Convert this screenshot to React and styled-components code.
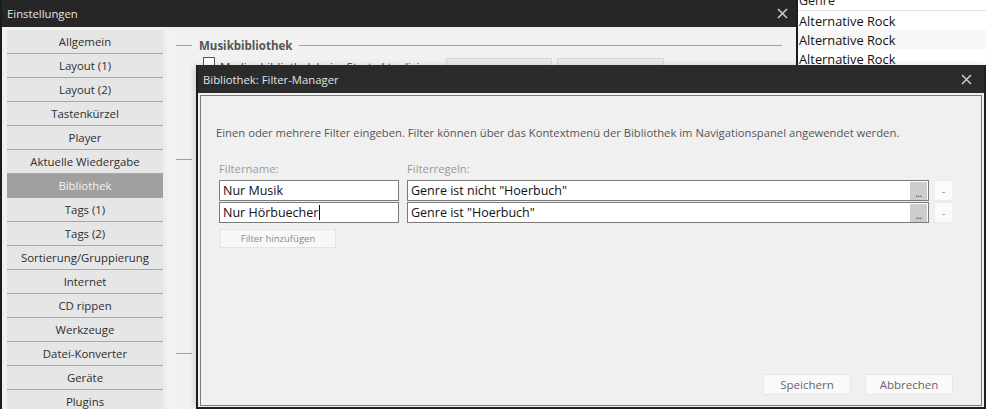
import styled, { createGlobalStyle } from 'styled-components';

const GlobalStyle = createGlobalStyle`
  html, body {
    margin: 0;
    padding: 0;
    overflow: hidden;
    background: #f0f0f0;
  }
  * {
    box-sizing: border-box;
  }
`;

const navItems = [
  'Allgemein',
  'Layout (1)',
  'Layout (2)',
  'Tastenkürzel',
  'Player',
  'Aktuelle Wiedergabe',
  'Bibliothek',
  'Tags (1)',
  'Tags (2)',
  'Sortierung/Gruppierung',
  'Internet',
  'CD rippen',
  'Werkzeuge',
  'Datei-Konverter',
  'Geräte',
  'Plugins',
];

const filters = [
  { name: 'Nur Musik', rule: 'Genre ist nicht "Hoerbuch"' },
  { name: 'Nur Hörbuecher', rule: 'Genre ist "Hoerbuch"', editing: true },
];

const CloseIcon = () => (
  <svg width="11" height="11" viewBox="0 0 11 11">
    <path d="M1 1 L10 10 M10 1 L1 10" stroke="#c8c8c8" strokeWidth="1.6" fill="none" />
  </svg>
);

const App = () => {
  return (
    <Screen>
      <GlobalStyle />
      <SettingsWindow>
        <TitleBar>
          <TitleText>Einstellungen</TitleText>
          <CloseIcon />
        </TitleBar>
        <SettingsBody>
          <Nav>
            {navItems.map((item) => (
              <NavItem key={item} $active={item === 'Bibliothek'}>
                {item}
              </NavItem>
            ))}
          </Nav>
          <NavShade />
          <Main>
            <Section $height={114}>
              <SectionHeader>
                <HeaderLine $w={16} />
                <SectionTitle>Musikbibliothek</SectionTitle>
                <HeaderLine $grow />
              </SectionHeader>
              <OptionRow>
                <Checkbox />
                <OptionText>Medienbibliothek beim Start aktualisieren</OptionText>
                <GhostButton $w={106} />
                <GhostButton $w={107} />
              </OptionRow>
            </Section>
            <Section $height={194}>
              <SectionHeader>
                <HeaderLine $w={16} />
                <SectionTitle>Navigation</SectionTitle>
                <HeaderLine $grow />
              </SectionHeader>
            </Section>
            <Section $height={60}>
              <SectionHeader>
                <HeaderLine $w={16} />
                <SectionTitle>Erweitert</SectionTitle>
                <HeaderLine $grow />
              </SectionHeader>
            </Section>
          </Main>
        </SettingsBody>
      </SettingsWindow>

      <ListPanel>
        <ListHeader>Genre</ListHeader>
        <ListRow>Alternative Rock</ListRow>
        <ListRow $alt>Alternative Rock</ListRow>
        <ListRow>Alternative Rock</ListRow>
        <ListRow $alt>Alternative Rock</ListRow>
      </ListPanel>

      <Dialog>
        <DialogTitleBar>
          <TitleText>Bibliothek: Filter-Manager</TitleText>
          <CloseIcon />
        </DialogTitleBar>
        <DialogFrame>
          <DialogInner>
            <Description>
              Einen oder mehrere Filter eingeben. Filter können über das Kontextmenü der Bibliothek im
              Navigationspanel angewendet werden.
            </Description>
            <FilterGrid>
              <FieldLabel>Filtername:</FieldLabel>
              <FieldLabel>Filterregeln:</FieldLabel>
              <span />
              {filters.map((f) => (
                <FilterRow key={f.name}>
                  <TextBox>
                    {f.name}
                    {f.editing && <Caret />}
                  </TextBox>
                  <TextBox>
                    <RuleText>{f.rule}</RuleText>
                    <DotsButton>...</DotsButton>
                  </TextBox>
                  <RemoveButton>-</RemoveButton>
                </FilterRow>
              ))}
            </FilterGrid>
            <AddButton>Filter hinzufügen</AddButton>
            <Footer>
              <DialogButton>Speichern</DialogButton>
              <DialogButton>Abbrechen</DialogButton>
            </Footer>
          </DialogInner>
        </DialogFrame>
      </Dialog>
    </Screen>
  );
};

export default App;

const font = `"Open Sans", "Noto Sans", sans-serif`;

const Screen = styled.div`
  position: relative;
  width: 986px;
  height: 409px;
  display: flex;
  overflow: hidden;
  font-family: ${font};
  background: #f0f0f0;
`;

const SettingsWindow = styled.div`
  width: 798px;
  height: 409px;
  display: flex;
  flex-direction: column;
  border-left: 2px solid #1c1c1c;
  border-right: 2px solid #1c1c1c;
  background: #f0f0f0;
`;

const TitleBar = styled.div`
  height: 27px;
  flex-shrink: 0;
  background: #262626;
  display: flex;
  align-items: center;
  justify-content: space-between;
  padding: 0 8px 0 5px;
`;

const TitleText = styled.span`
  color: #e4e4e4;
  font-size: 11.3px;
`;

const SettingsBody = styled.div`
  flex: 1;
  display: flex;
  padding-top: 3px;
`;

const Nav = styled.div`
  width: 161px;
  padding-left: 5px;
  display: flex;
  flex-direction: column;
`;

const NavItem = styled.div`
  height: 24px;
  flex-shrink: 0;
  display: flex;
  align-items: center;
  justify-content: center;
  font-size: 11.4px;
  color: ${(p) => (p.$active ? '#f4f4f4' : '#2e2e2e')};
  background: ${(p) => (p.$active ? '#a0a0a0' : '#e6e6e6')};
  border-bottom: 1px solid ${(p) => (p.$active ? '#a0a0a0' : '#a8a8a8')};
`;

const NavShade = styled.div`
  width: 8px;
  background: linear-gradient(to right, #ececec, #f4f4f4);
`;

const Main = styled.div`
  flex: 1;
  display: flex;
  flex-direction: column;
  padding: 7px 14px 0 5px;
  background: #f1f1f1;
`;

const Section = styled.div`
  height: ${(p) => p.$height}px;
  display: flex;
  flex-direction: column;
  gap: 4px;
`;

const SectionHeader = styled.div`
  display: flex;
  align-items: center;
  gap: 7px;
  height: 16px;
`;

const HeaderLine = styled.div`
  height: 1px;
  background: #a0a0a0;
  width: ${(p) => (p.$w ? `${p.$w}px` : 'auto')};
  flex: ${(p) => (p.$grow ? 1 : 'none')};
`;

const SectionTitle = styled.span`
  font-size: 11.5px;
  font-weight: 700;
  color: #555;
`;

const OptionRow = styled.div`
  display: flex;
  align-items: flex-start;
  gap: 5px;
  padding-left: 27px;
`;

const Checkbox = styled.div`
  width: 12px;
  height: 12px;
  border: 1px solid #555;
  background: #fff;
`;

const OptionText = styled.span`
  font-size: 11.5px;
  line-height: 14px;
  margin-top: 3px;
  color: #333;
  width: 221px;
  white-space: nowrap;
  overflow: hidden;
`;

const GhostButton = styled.div`
  width: ${(p) => p.$w}px;
  height: 20px;
  margin-top: 1px;
  background: #e9e9e9;
  border: 1px solid #d6d6d6;
`;

const ListPanel = styled.div`
  flex: 1;
  display: flex;
  flex-direction: column;
  background: #fff;
  margin-top: -9px;
`;

const ListHeader = styled.div`
  height: 20px;
  display: flex;
  align-items: center;
  padding-left: 1px;
  font-size: 12.5px;
  color: #222;
  border-bottom: 1px solid #e2e2e2;
`;

const ListRow = styled.div`
  height: 19px;
  display: flex;
  align-items: center;
  padding-left: 1px;
  font-size: 12.8px;
  color: #111;
  background: ${(p) => (p.$alt ? '#f7f7f7' : '#fff')};
`;

const Dialog = styled.div`
  position: absolute;
  left: 196px;
  top: 65px;
  right: 0;
  bottom: 0;
  display: flex;
  flex-direction: column;
  background: #1e1e1e;
  padding: 0 2px 2px 2px;
  box-shadow: -2px 0 6px rgba(0, 0, 0, 0.12);
`;

const DialogTitleBar = styled.div`
  height: 28px;
  flex-shrink: 0;
  background: #2b2b2b;
  display: flex;
  align-items: center;
  justify-content: space-between;
  padding: 0 12px 0 5px;
`;

const DialogFrame = styled.div`
  flex: 1;
  display: flex;
  padding: 2px 2px 1px 2px;
  background: #f0f0f0;
`;

const DialogInner = styled.div`
  flex: 1;
  display: flex;
  flex-direction: column;
  border: 1px solid #7c7c7c;
  padding: 29px 28px 10px 15px;
  background: #f0f0f0;
`;

const Description = styled.div`
  font-size: 11.25px;
  line-height: 16px;
  color: #555;
  white-space: nowrap;
`;

const FilterGrid = styled.div`
  display: grid;
  grid-template-columns: 180px 522px 16px;
  column-gap: 8px;
  row-gap: 1px;
  margin-top: 20px;
  padding-left: 3px;
`;

const FilterRow = styled.div`
  display: contents;
`;

const FieldLabel = styled.span`
  font-size: 11.3px;
  line-height: 16px;
  color: #9a9a9a;
  margin-bottom: 2px;
`;

const TextBox = styled.div`
  height: 21px;
  display: flex;
  align-items: center;
  padding: 0 1px 0 3px;
  background: #fff;
  border: 1px solid #7a7a7a;
  font-size: 12.5px;
  color: #111;
`;

const RuleText = styled.span`
  flex: 1;
`;

const Caret = styled.span`
  width: 1px;
  height: 15px;
  background: #111;
  margin-left: 1px;
`;

const DotsButton = styled.span`
  width: 17px;
  height: 18px;
  background: #cdcdcd;
  color: #444;
  font-size: 10px;
  line-height: 10px;
  display: flex;
  align-items: flex-end;
  justify-content: center;
  padding-bottom: 2px;
  letter-spacing: -0.5px;
`;

const RemoveButton = styled.div`
  height: 21px;
  margin-left: -3px;
  display: flex;
  align-items: center;
  justify-content: center;
  background: #fbfbfb;
  border: 1px solid #ececec;
  font-size: 10px;
  color: #888;
`;

const AddButton = styled.div`
  width: 116px;
  height: 19px;
  margin-top: 6px;
  margin-left: 4px;
  display: flex;
  align-items: center;
  justify-content: center;
  background: #f8f8f8;
  border: 1px solid #e4e4e4;
  font-size: 9.5px;
  color: #8a8a8a;
`;

const Footer = styled.div`
  margin-top: auto;
  display: flex;
  justify-content: flex-end;
  gap: 14px;
`;

const DialogButton = styled.div`
  width: 88px;
  height: 21px;
  display: flex;
  align-items: center;
  justify-content: center;
  background: #fafafa;
  border: 1px solid #e6e6e6;
  font-size: 11.5px;
  color: #666;
`;
